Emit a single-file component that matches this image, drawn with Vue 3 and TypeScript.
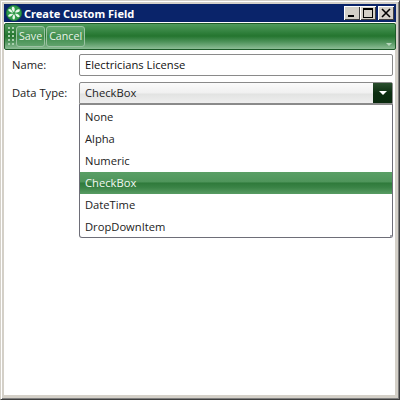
<script setup lang="ts">
const items: string[] = ['None', 'Alpha', 'Numeric', 'CheckBox', 'DateTime', 'DropDownItem']
const selected = 'CheckBox'
</script>

<template>
  <div class="window">
    <div class="titlebar">
      <svg class="logo" width="16" height="16" viewBox="0 0 16 16">
        <circle cx="8" cy="8" r="7.6" fill="#2f9a4a" stroke="#1d7a35" stroke-width="0.8" />
        <g fill="#eaf8ec">
          <path d="M8 7.2 C6 5.8 5 3.6 6.2 1.8 C8.2 1.4 9.6 3.4 8 7.2Z" />
          <path d="M8.8 7.4 C9.8 5.2 11.6 3.6 13.6 4.4 C14.4 6.2 12.4 7.8 8.8 7.4Z" />
          <path d="M9 8.4 C11.2 8.4 13.4 9.4 13.8 11.4 C12.6 13 10.4 12.2 9 8.4Z" />
          <path d="M8 9 C9.2 11 9.6 13.2 8.2 14.4 C6.2 14.6 5.6 12.4 8 9Z" />
          <path d="M7.2 8.8 C6.2 10.8 4.4 12.4 2.4 11.6 C1.6 9.8 3.6 8.2 7.2 8.8Z" />
          <path d="M7 7.8 C4.8 7.6 2.6 6.6 2.2 4.8 C3.4 3 5.6 3.8 7 7.8Z" />
        </g>
      </svg>
      <span class="title">Create Custom Field</span>
      <div class="controls">
        <button class="ctl"><svg width="16" height="14" viewBox="0 0 16 14"><rect x="4" y="9" width="6" height="2" fill="#000" /></svg></button>
        <button class="ctl"><svg width="16" height="14" viewBox="0 0 16 14"><rect x="3.5" y="2.5" width="9" height="9" fill="none" stroke="#000" /><rect x="3" y="2" width="10" height="2" fill="#000" /></svg></button>
        <button class="ctl close"><svg width="16" height="14" viewBox="0 0 16 14"><path d="M4 3l8 8M12 3l-8 8" stroke="#000" stroke-width="1.6" fill="none" /></svg></button>
      </div>
    </div>
    <div class="toolbar">
      <div class="grip"><i v-for="n in 10" :key="n"></i></div>
      <button class="tbtn">Save</button>
      <button class="tbtn">Cancel</button>
      <span class="overflow"></span>
    </div>
    <div class="content">
      <div class="row name-row">
        <label>Name:</label>
        <div class="input">Electricians License</div>
      </div>
      <div class="row type-row">
        <label>Data Type:</label>
        <div class="combo-wrap">
          <div class="combo">
            <span class="combo-text">CheckBox</span>
            <span class="arrow"><i></i></span>
          </div>
          <ul class="menu">
            <li v-for="it in items" :key="it" :class="{ sel: it === selected }">{{ it }}</li>
          </ul>
        </div>
      </div>
    </div>
  </div>
</template>

<style>
html, body { margin: 0; padding: 0; background: #fff; }
</style>

<style scoped>
.window {
  box-sizing: border-box;
  width: 400px;
  height: 400px;
  background: #fff;
  border: 1px solid;
  border-color: #d4d0c8 #404040 #404040 #d4d0c8;
  box-shadow: inset 1px 1px 0 #fff, inset -1px -1px 0 #808080;
  padding: 3px 3px 4px 3px;
  position: relative;
  display: flex;
  flex-direction: column;
  font-family: "Open Sans", "Liberation Sans", sans-serif;
  font-size: 11.2px;
  color: #222;
}
.window::before {
  content: "";
  position: absolute;
  inset: 1px;
  border: 2px solid #d4d0c8;
  border-right-width: 3px;
  border-bottom-width: 3px;
  pointer-events: none;
}
.titlebar {
  height: 18px;
  background: #0a246a;
  display: flex;
  align-items: center;
  flex: none;
  position: relative;
  z-index: 1;
  margin-bottom: 1px;
}
.logo { margin-left: 2px; flex: none; }
.title {
  margin-left: 2px;
  color: #fff;
  font-weight: 700;
  font-family: "Noto Sans", "DejaVu Sans", sans-serif;
  font-size: 11px;
  white-space: nowrap;
}
.controls { margin-left: auto; margin-right: 2px; display: flex; }
.ctl {
  width: 16px;
  height: 14px;
  padding: 0;
  border: 0;
  background: #d4d0c8;
  box-shadow: inset 1px 1px 0 #fff, inset -1px -1px 0 #404040;
  display: block;
}
.ctl svg { display: block; }
.close { margin-left: 2px; }
.toolbar {
  height: 27px;
  box-sizing: border-box;
  flex: none;
  display: flex;
  align-items: center;
  padding-left: 3px;
  border: 1px solid #1c5a28;
  border-radius: 2px;
  background: linear-gradient(#4f9a5c 0%, #2f7f3b 35%, #24752f 48%, #4b9157 70%, #8dbd96 100%);
  position: relative;
  z-index: 1;
}
.grip {
  width: 6px;
  height: 20px;
  display: grid;
  grid-template-columns: 2px 2px;
  grid-auto-rows: 2px;
  gap: 2px;
  margin-right: 2px;
  flex: none;
}
.grip i { background: #a9d0af; display: block; }
.tbtn {
  height: 21px;
  padding: 0 2px;
  margin-right: 1px;
  border: 1px solid #9cc2a3;
  border-radius: 3px;
  background: linear-gradient(#67aa72, #3f8c4b 50%, #60a26c);
  color: #e8f3ea;
  font-family: "Open Sans", sans-serif;
  font-size: 10.7px;
  line-height: 17px;
}
.overflow {
  position: absolute;
  right: 3px;
  bottom: 3px;
  border-left: 3px solid transparent;
  border-right: 3px solid transparent;
  border-top: 3px solid #b5d6bb;
}
.content { flex: 1; padding: 4px 3px 0 8px; }
.row { display: flex; }
label {
  width: 67px;
  flex: none;
  line-height: 22px;
  color: #222;
}
.name-row { margin-bottom: 6px; }
.input {
  flex: 1;
  height: 22px;
  box-sizing: border-box;
  border: 1px solid #8a8a8a;
  border-radius: 2px;
  padding-left: 5px;
  line-height: 20px;
  color: #111;
}
.combo-wrap { flex: 1; }
.combo {
  height: 22px;
  box-sizing: border-box;
  border: 1px solid #8a8a8a;
  border-radius: 2px 2px 0 0;
  background: linear-gradient(#fbfbfb, #f0f0f0 50%, #e2e3e2 55%, #eeeeee);
  display: flex;
  line-height: 20px;
}
.combo-text { flex: 1; padding-left: 5px; color: #222; }
.arrow {
  width: 19px;
  background: linear-gradient(#2a4f2e, #0c2d10 50%, #0a2a0e);
  display: flex;
  align-items: center;
  justify-content: center;
}
.arrow i {
  display: block;
  border-left: 4px solid transparent;
  border-right: 4px solid transparent;
  border-top: 4px solid #fff;
}
.menu {
  list-style: none;
  margin: 0;
  padding: 1px 0;
  box-sizing: border-box;
  height: 134px;
  border: 1px solid #6e6e78;
  border-top-color: #8a8a8a;
  border-radius: 0 0 3px 3px;
  background: #fff;
  position: relative;
}
.menu::after {
  content: "";
  position: absolute;
  right: 0;
  bottom: 0;
  width: 2px;
  height: 2px;
  background: #a0a0a8;
}
.menu li {
  height: 22px;
  line-height: 22px;
  padding-left: 5px;
  color: #222;
}
.menu li.sel {
  background: linear-gradient(#5a9f66 0%, #4f955b 45%, #2f7a3b 50%, #3a8346 70%, #589c63 100%);
  color: #f2f8f3;
}
</style>
